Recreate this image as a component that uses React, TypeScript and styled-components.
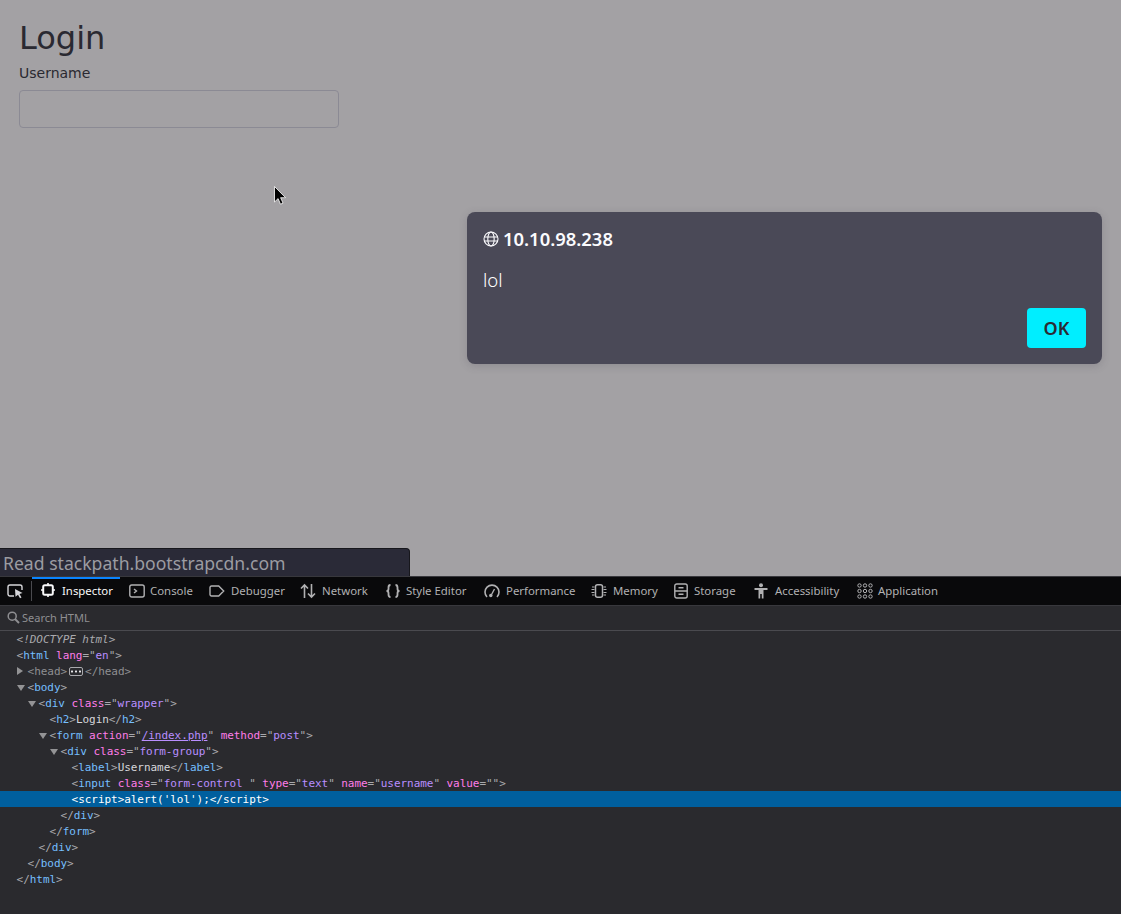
import React from 'react'
import styled, { createGlobalStyle } from 'styled-components'

const GlobalStyle = createGlobalStyle`
  html, body {
    margin: 0;
    padding: 0;
    background: #2a2a2e;
  }
`

const Screen = styled.div`
  width: 1121px;
  height: 914px;
  display: flex;
  flex-direction: column;
  overflow: hidden;
`

const Viewport = styled.div`
  position: relative;
  height: 576px;
  flex: none;
  background: #a3a1a4;
  padding: 20px;
  box-sizing: border-box;
  font-family: 'DejaVu Sans', sans-serif;
  color: #2a2931;
`

const Heading = styled.h2`
  margin: 0 0 9px -1px;
  font-size: 32px;
  font-weight: 400;
  line-height: 36px;
`

const FieldLabel = styled.label`
  display: block;
  margin: 0 0 8px -1px;
  font-size: 14px;
  line-height: 17px;
`

const TextInput = styled.div`
  width: 320px;
  height: 38px;
  margin-left: -1px;
  box-sizing: border-box;
  border: 1px solid #8b8a94;
  border-radius: 4px;
`

const Pointer = styled.svg`
  position: absolute;
  left: 274px;
  top: 186px;
`

const Dialog = styled.div`
  position: absolute;
  left: 467px;
  top: 212px;
  width: 635px;
  height: 152px;
  box-sizing: border-box;
  padding: 16px;
  background: #4a4957;
  border-radius: 8px;
  box-shadow: 0 2px 8px rgba(58, 57, 68, 0.2);
  color: #fbfbfe;
  font-family: 'Noto Sans', sans-serif;
  display: flex;
  flex-direction: column;
`

const DialogTitle = styled.div`
  display: flex;
  align-items: center;
  gap: 4px;
  height: 20px;
  font-size: 18.4px;
  font-weight: 600;
  svg {
    margin-top: 2px;
  }
`

const DialogMessage = styled.div`
  margin-top: 20px;
  font-size: 18.6px;
  font-weight: 300;
  line-height: 24px;
  color: #ffffff;
`

const DialogActions = styled.div`
  margin-top: auto;
  display: flex;
  justify-content: flex-end;
`

const OkButton = styled.button`
  width: 59px;
  height: 40px;
  border: none;
  border-radius: 4px;
  background: #00eeff;
  color: #2b2a33;
  font-family: 'Noto Sans', sans-serif;
  font-size: 18px;
  font-weight: 600;
  padding: 0;
`

const StatusTip = styled.div`
  position: absolute;
  left: 0;
  bottom: 0;
  width: 410px;
  height: 28px;
  box-sizing: border-box;
  padding: 2px 0 0 3px;
  background: #2a2a37;
  border: 1px solid #17171c;
  border-left: none;
  border-bottom: none;
  border-top-right-radius: 4px;
  color: #9c9ca2;
  font-family: 'Noto Sans', sans-serif;
  font-size: 17.6px;
  line-height: 24px;
`

const DevTools = styled.div`
  flex: 1;
  display: flex;
  flex-direction: column;
  background: #2a2a2e;
`

const Toolbar = styled.div`
  height: 30px;
  box-sizing: border-box;
  display: flex;
  align-items: stretch;
  flex: none;
  background: #09090b;
  border-top: 1px solid #38383d;
  border-bottom: 1px solid #38383d;
  font-family: 'Noto Sans', sans-serif;
  font-size: 11.4px;
`

const PickerButton = styled.div`
  width: 32px;
  flex: none;
  box-sizing: border-box;
  display: flex;
  align-items: center;
  padding: 0 0 1px 7px;
  position: relative;
  &::after {
    content: '';
    position: absolute;
    right: 0;
    top: 4px;
    bottom: 4px;
    width: 1px;
    background: #4a4a4f;
  }
`

const Tab = styled.div<{ $active?: boolean; $width: number; $gap: number }>`
  width: ${p => p.$width}px;
  flex: none;
  box-sizing: border-box;
  display: flex;
  align-items: center;
  gap: ${p => p.$gap}px;
  padding: 0 0 4px 9px;
  white-space: nowrap;
  color: ${p => (p.$active ? '#f9f9fa' : '#b1b1b3')};
  border-top: 2px solid ${p => (p.$active ? '#0a84ff' : 'transparent')};
  svg {
    flex: none;
    margin-top: 2px;
  }
`

const SearchBar = styled.div`
  height: 24px;
  box-sizing: content-box;
  flex: none;
  display: flex;
  align-items: center;
  gap: 2px;
  padding-left: 7px;
  border-bottom: 1px solid #4a4a4f;
  color: #8f8f92;
  font-family: 'Noto Sans', sans-serif;
  font-size: 11px;
  line-height: 22px;
  svg {
    margin-top: -1px;
  }
`

const Markup = styled.div`
  font-family: 'DejaVu Sans Mono', monospace;
  font-size: 11px;
  letter-spacing: -0.045px;
  line-height: 16px;
  color: #d7d7db;
`

const Row = styled.div<{ $depth: number; $selected?: boolean }>`
  position: relative;
  height: 16px;
  box-sizing: border-box;
  padding: 1px 0 0 ${p => 16.6 + p.$depth * 11}px;
  white-space: pre;
  background: ${p => (p.$selected ? '#005f9e' : 'transparent')};
`

const Twisty = styled.span<{ $open?: boolean }>`
  position: absolute;
  margin-left: -11px;
  top: ${p => (p.$open ? 6 : 4)}px;
  width: 0;
  height: 0;
  ${p =>
    p.$open
      ? `border-left: 4.5px solid transparent;
         border-right: 4.5px solid transparent;
         border-top: 6px solid #939395;`
      : `border-top: 4.5px solid transparent;
         border-bottom: 4.5px solid transparent;
         border-left: 6px solid #939395;`}
`

const Punct = styled.span<{ $selected?: boolean }>`
  color: ${p => (p.$selected ? '#ffffff' : '#a9a9ad')};
`

const TagName = styled.span<{ $selected?: boolean }>`
  color: ${p => (p.$selected ? '#ffffff' : '#75bfff')};
`

const AttrName = styled.span`
  color: #ff7de9;
`

const AttrValue = styled.span`
  color: #b98eff;
`

const Link = styled(AttrValue)`
  text-decoration: underline;
`

const Doctype = styled.span`
  color: #a9a9ad;
  font-style: italic;
`

const Dim = styled.span`
  color: #8f8f92;
`

const Ellipsis = styled.span`
  display: inline-block;
  width: 14px;
  height: 9px;
  margin: 0 2px 0 2px;
  vertical-align: -1px;
  border: 1px solid #a9a9ad;
  border-radius: 2px;
  box-sizing: border-box;
  background: radial-gradient(circle at center, #e4e4e8 1px, transparent 1.2px) 0 0 / 4px 100% repeat-x;
`

const Ico = ({ children, w = 16 }: { children: React.ReactNode; w?: number }) => (
  <svg width={w} height={16} viewBox={`0 0 ${w} 16`} fill="none" stroke="currentColor" strokeWidth={1.4}>
    {children}
  </svg>
)

const tabs = [
  {
    label: 'Inspector',
    active: true,
    width: 88,
    gap: 7,
    w: 14,
    icon: (
      <>
        <rect x="2.2" y="2.2" width="9.6" height="9.6" rx="1.5" strokeWidth={2} />
        <path d="M7 0v2M7 12v2M0 7h2M12 7h2" strokeWidth={1.6} />
      </>
    ),
  },
  {
    label: 'Console',
    width: 80,
    gap: 5,
    icon: (
      <>
        <rect x="0.8" y="2" width="14.4" height="12" rx="2" />
        <path d="M5 6l2.5 2L5 10" />
      </>
    ),
  },
  {
    label: 'Debugger',
    width: 91,
    gap: 6,
    icon: <path d="M2.5 3h7.2l5 5-5 5H2.5A1.5 1.5 0 0 1 1 11.500V4.500A1.500 1.500 0 0 1 2.500 3z" />,
  },
  {
    label: 'Network',
    width: 85,
    gap: 6,
    icon: (
      <path d="M4.500 15V2M1 5.500L4.500 2 8 5.500M11.500 1v13M8 10.500l3.500 3.500 3.500-3.500" strokeWidth={1.6} />
    ),
  },
  {
    label: 'Style Editor',
    width: 99,
    gap: 5,
    icon: (
      <path
        d="M5.500 2C3.500 2 3.500 3 3.500 4.500v1.500C3.500 7.500 3 8 1.500 8c1.500 0 2 .5 2 2v1.500c0 1.500 0 2.500 2 2.500M10.500 2c2 0 2 1 2 2.500v1.500c0 1.500.5 2 2 2-1.500 0-2 .5-2 2v1.500c0 1.500 0 2.500-2 2.500"
        strokeWidth={1.8}
      />
    ),
  },
  {
    label: 'Performance',
    width: 107,
    gap: 6,
    icon: (
      <>
        <path d="M3 14A7 7 0 1 1 13 14" strokeWidth={1.6} />
        <path d="M7 12.500L10.500 6" />
        <circle cx="6.800" cy="12.500" r="1.700" fill="currentColor" stroke="none" />
      </>
    ),
  },
  {
    label: 'Memory',
    width: 83,
    gap: 6,
    icon: (
      <>
        <rect x="4.500" y="1.800" width="7" height="12.400" rx="2" strokeWidth={1.500} />
        <path d="M1 4h2.500M0.500 6.500h3M0.500 9.500h3M1 12h2.500M12.500 4H15M12.500 6.500h3M12.500 9.500h3M12.500 12H15" strokeWidth={1} />
      </>
    ),
  },
  {
    label: 'Storage',
    width: 80,
    gap: 6,
    w: 14,
    icon: (
      <>
        <rect x="0.800" y="1" width="12.400" height="14" rx="2" />
        <path d="M0.800 8h12.400M4.500 4.700h5M4.500 11.300h5" />
      </>
    ),
  },
  {
    label: 'Accessibility',
    width: 103,
    gap: 7,
    w: 14,
    icon: (
      <>
        <circle cx="7" cy="2.200" r="2" fill="currentColor" stroke="none" />
        <path d="M0.500 5h13v2H9.500v8.500H7.800V11H6.200v4.500H4.500V7H0.500z" fill="currentColor" stroke="none" />
      </>
    ),
  },
  {
    label: 'Application',
    width: 90,
    gap: 5,
    icon: (
      <g strokeWidth={1}>
        {[2.500, 8, 13.500].map(y =>
          [2.500, 8, 13.500].map(x => <circle key={`${x}-${y}`} cx={x} cy={y} r={1.700} />)
        )}
      </g>
    ),
  },
]

const Open = ({ name, sel }: { name: string; sel?: boolean }) => (
  <>
    <Punct $selected={sel}>{'<'}</Punct>
    <TagName $selected={sel}>{name}</TagName>
  </>
)

const Close = ({ name, sel }: { name: string; sel?: boolean }) => (
  <>
    <Punct $selected={sel}>{'</'}</Punct>
    <TagName $selected={sel}>{name}</TagName>
    <Punct $selected={sel}>{'>'}</Punct>
  </>
)

const Attr = ({ name, value }: { name: string; value: string }) => (
  <>
    {' '}
    <AttrName>{name}</AttrName>
    <Punct>{'="'}</Punct>
    <AttrValue>{value}</AttrValue>
    <Punct>{'"'}</Punct>
  </>
)

const Gt = () => <Punct>{'>'}</Punct>

export default function App() {
  return (
    <Screen>
      <GlobalStyle />
      <Viewport>
        <Heading>Login</Heading>
        <FieldLabel>Username</FieldLabel>
        <TextInput />
        <Pointer width="13" height="20" viewBox="0 0 13 20">
          <path d="M0.500 0.500V16l3.600-3.400 2.400 5.600 2.500-1.100-2.400-5.400h5z" fill="#000" stroke="#fff" strokeWidth={0.800} />
        </Pointer>
        <Dialog>
          <DialogTitle>
            <svg width="16" height="16" viewBox="0 0 16 16" fill="none" stroke="#fbfbfe" strokeWidth={1.100}>
              <circle cx="8" cy="8" r="7" />
              <ellipse cx="8" cy="8" rx="3.200" ry="7" />
              <path d="M1 6h14M1 10h14" />
            </svg>
            10.10.98.238
          </DialogTitle>
          <DialogMessage>lol</DialogMessage>
          <DialogActions>
            <OkButton>OK</OkButton>
          </DialogActions>
        </Dialog>
        <StatusTip>Read stackpath.bootstrapcdn.com</StatusTip>
      </Viewport>
      <DevTools>
        <Toolbar>
          <PickerButton>
            <svg width="17" height="16" viewBox="0 0 17 16" fill="none" stroke="#d7d7db" strokeWidth={1.400}>
              <path d="M7 13H3a2 2 0 0 1-2-2V4a2 2 0 0 1 2-2h10a2 2 0 0 1 2 2v3" />
              <path d="M8 6l7.500 4-3 1 2 3.500-1.500.800-2-3.500-2.500 2z" fill="#d7d7db" stroke="none" />
            </svg>
          </PickerButton>
          {tabs.map(t => (
            <Tab key={t.label} $active={t.active} $width={t.width} $gap={t.gap}>
              <Ico w={t.w}>{t.icon}</Ico>
              {t.label}
            </Tab>
          ))}
        </Toolbar>
        <SearchBar>
          <svg width="13" height="13" viewBox="0 0 13 13" fill="none" stroke="#8f8f92" strokeWidth={1.500}>
            <circle cx="5.200" cy="5.200" r="4" />
            <path d="M8 8l4 4" strokeWidth={2} />
          </svg>
          <span>Search HTML</span>
        </SearchBar>
        <Markup>
          <Row $depth={0}>
            <Doctype>{'<!DOCTYPE html>'}</Doctype>
          </Row>
          <Row $depth={0}>
            <Open name="html" />
            <Attr name="lang" value="en" />
            <Gt />
          </Row>
          <Row $depth={1}>
            <Twisty />
            <Dim>{'<head>'}</Dim>
            <Ellipsis />
            <Dim>{'</head>'}</Dim>
          </Row>
          <Row $depth={1}>
            <Twisty $open />
            <Open name="body" />
            <Gt />
          </Row>
          <Row $depth={2}>
            <Twisty $open />
            <Open name="div" />
            <Attr name="class" value="wrapper" />
            <Gt />
          </Row>
          <Row $depth={3}>
            <Open name="h2" />
            <Gt />
            Login
            <Close name="h2" />
          </Row>
          <Row $depth={3}>
            <Twisty $open />
            <Open name="form" />
            {' '}
            <AttrName>action</AttrName>
            <Punct>{'="'}</Punct>
            <Link>/index.php</Link>
            <Punct>{'"'}</Punct>
            <Attr name="method" value="post" />
            <Gt />
          </Row>
          <Row $depth={4}>
            <Twisty $open />
            <Open name="div" />
            <Attr name="class" value="form-group" />
            <Gt />
          </Row>
          <Row $depth={5}>
            <Open name="label" />
            <Gt />
            Username
            <Close name="label" />
          </Row>
          <Row $depth={5}>
            <Open name="input" />
            <Attr name="class" value="form-control " />
            <Attr name="type" value="text" />
            <Attr name="name" value="username" />
            <Attr name="value" value="" />
            <Gt />
          </Row>
          <Row $depth={5} $selected>
            <Open name="script" sel />
            <Punct $selected>{'>'}</Punct>
            <Punct $selected>{"alert('lol');"}</Punct>
            <Close name="script" sel />
          </Row>
          <Row $depth={4}>
            <Close name="div" />
          </Row>
          <Row $depth={3}>
            <Close name="form" />
          </Row>
          <Row $depth={2}>
            <Close name="div" />
          </Row>
          <Row $depth={1}>
            <Close name="body" />
          </Row>
          <Row $depth={0}>
            <Close name="html" />
          </Row>
        </Markup>
      </DevTools>
    </Screen>
  )
}
